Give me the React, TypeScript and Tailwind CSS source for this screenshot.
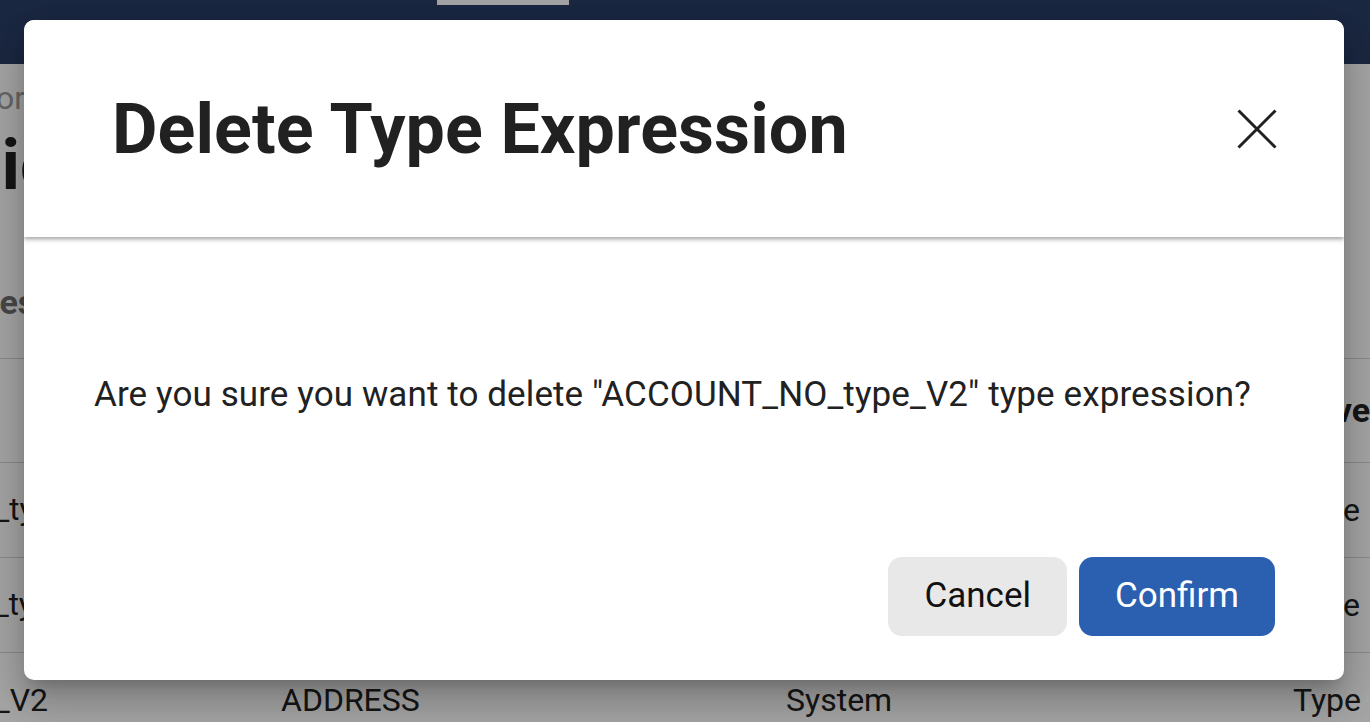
import React from 'react';

const rows = [
	{ left: 'EMAIL_type', offset: '-ml-[95px]', right: 'Type' },
	{ left: 'PHONE_type', offset: '-ml-[108px]', right: 'Type' },
];

function CloseIcon() {
	return (
		<svg width="40" height="40" viewBox="0 0 40 40" fill="none">
			<path d="M1.5 1.5 38.5 38.5M38.5 1.5 1.5 38.5" stroke="#212121" strokeWidth="3" />
		</svg>
	);
}

// Page behind the dialog, only its edges are visible
function Page() {
	return (
		<div className="h-[722px] overflow-hidden bg-white">
			{/* Navbar */}
			<div className="flex h-16 bg-[#2a3e66]">
				<div className="w-[437px]" />
				<div className="h-[5px] w-[132px] bg-white" />
			</div>

			{/* Breadcrumb */}
			<div className="flex h-[68px] items-center">
				<div className="flex w-[25px] justify-end overflow-hidden">
					<span className="whitespace-nowrap text-[32px] text-[#9e9e9e]">Data Editor</span>
				</div>
			</div>

			{/* Title */}
			<div className="flex h-[66px] items-center">
				<div className="flex w-[60px] justify-start overflow-hidden">
					<span className="-ml-[44px] whitespace-nowrap text-[70px] font-bold leading-none text-[#212121]">
						Dictionaries
					</span>
				</div>
			</div>

			{/* Sub heading */}
			<div className="flex h-[160px] items-end pb-[36px]">
				<div className="flex w-[40px] justify-start overflow-hidden">
					<span className="-ml-[151px] whitespace-nowrap text-[34px] font-bold leading-[40px] text-[#6f6f6f]">
						Type Expressions
					</span>
				</div>
			</div>

			{/* Table */}
			<div className="border-t border-[#d6d6d6]">
				<div className="flex h-[104px] items-center justify-end border-b border-[#d6d6d6]">
					<div className="flex w-[60px] justify-end overflow-hidden">
						<span className="whitespace-nowrap text-[34px] font-bold text-[#212121]">Active</span>
					</div>
				</div>
				{rows.map((row) => (
					<div
						key={row.left}
						className="flex h-[95px] items-center justify-between border-b border-[#d6d6d6]"
					>
						<div className="flex w-[60px] justify-start overflow-hidden">
							<span className={`${row.offset} whitespace-nowrap text-[31px] text-[#222]`}>{row.left}</span>
						</div>
						<div className="flex w-[60px] justify-end overflow-hidden pr-[10px]">
							<span className="whitespace-nowrap text-[32px] text-[#222]">{row.right}</span>
						</div>
					</div>
				))}
				<div className="flex h-[95px] items-center border-b border-[#d6d6d6]">
					<div className="flex w-[48px] shrink-0 justify-end overflow-hidden">
						<span className="whitespace-nowrap text-[32px] text-[#222]">ACCOUNT_NO_type_V2</span>
					</div>
					<div className="w-[233px] shrink-0" />
					<div className="w-[505px] shrink-0 whitespace-nowrap text-[32px] text-[#222]">ADDRESS</div>
					<div className="w-[507px] shrink-0 whitespace-nowrap text-[32px] text-[#222]">System</div>
					<div className="whitespace-nowrap text-[32px] text-[#222]">Type</div>
				</div>
			</div>
		</div>
	);
}

export default function App() {
	return (
		<div className="relative h-[722px] w-full overflow-hidden font-['Roboto',_'Liberation_Sans',_sans-serif]">
			<Page />

			{/* Backdrop + dialog */}
			<div className="absolute inset-0 flex items-start bg-black/35 pl-6 pt-5">
				<div className="flex h-[660px] w-[1320px] flex-col overflow-hidden rounded-[10px] bg-white shadow-[0_11px_15px_-7px_rgba(0,0,0,0.2),0_24px_38px_3px_rgba(0,0,0,0.14),0_9px_46px_8px_rgba(0,0,0,0.12)]">
					{/* Header */}
					<div className="relative z-10 flex h-[217px] shrink-0 items-center justify-between bg-white pl-[88px] pr-[67px] shadow-[0_2px_4px_rgba(0,0,0,0.3),0_3px_6px_rgba(0,0,0,0.08)]">
						<h2 className="text-[70px] font-bold leading-[1.2] tracking-[0.1px] text-[#212121]">
							Delete Type Expression
						</h2>
						<button type="button" className="flex h-10 w-10 items-center justify-center">
							<CloseIcon />
						</button>
					</div>

					{/* Body */}
					<div className="flex flex-1 flex-col pb-[44px] pl-[70px] pr-[69px] pt-[132px]">
						<p className="text-[35px] leading-[52px] tracking-[0.1px] text-[#212121]">
							Are you sure you want to delete "ACCOUNT_NO_type_V2" type expression?
						</p>
						<div className="mt-auto flex justify-end gap-3">
							<button
								type="button"
								className="h-[79px] rounded-[14px] bg-[#e8e8e8] px-9 text-[35px] text-[#111]"
							>
								Cancel
							</button>
							<button
								type="button"
								className="h-[79px] rounded-[14px] bg-[#2b5fb0] px-9 text-[35px] text-white"
							>
								Confirm
							</button>
						</div>
					</div>
				</div>
			</div>
		</div>
	);
}
